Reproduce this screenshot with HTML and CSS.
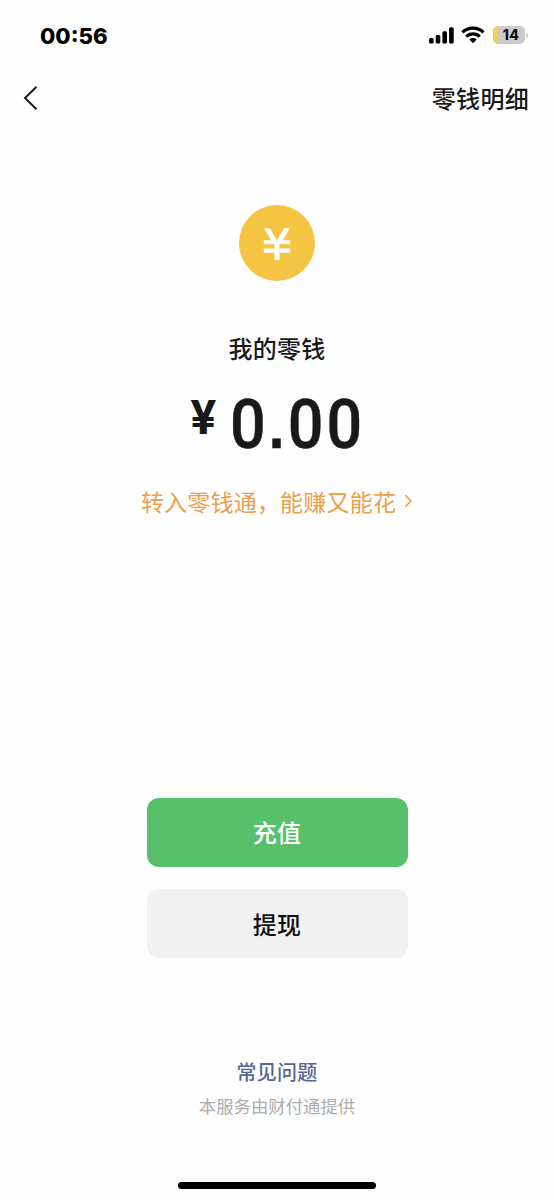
FILE: index.html
```html
<!DOCTYPE html>
<html lang="zh-CN">
<head>
<meta charset="utf-8">
<title>我的零钱</title>
<link rel="stylesheet" href="styles.css">
</head>
<body>
<div class="screen">
  <header class="status">
    <span class="time">00:56</span>
    <div class="indicators">
      <svg class="signal" width="25" height="17" viewBox="0 0 25 17">
        <rect x="0" y="11" width="4.6" height="5.5" rx="1.5"/>
        <rect x="6.7" y="8" width="4.6" height="8.5" rx="1.5"/>
        <rect x="13.4" y="4.3" width="4.6" height="12.2" rx="1.5"/>
        <rect x="20.1" y="0.3" width="4.6" height="16.2" rx="1.5"/>
      </svg>
      <svg class="wifi" width="24" height="18" viewBox="0 0 24 18">
        <path d="M1.500 6.300C7.300.7 16.700.7 22.500 6.300M5.300 10.700C9.100 6.900 14.900 6.900 18.700 10.700" fill="none" stroke="#000" stroke-width="3.200"/>
        <path d="M8.300 13.600C10.400 11.600 13.600 11.600 15.700 13.600L12 17.300Z"/>
      </svg>
      <div class="battery"><span class="level">14</span></div>
      <span class="battery-tip"></span>
    </div>
  </header>
  <nav class="nav">
    <svg class="back" width="16" height="26" viewBox="0 0 16 26"><path d="M13.500 1.800L2 13L13.500 24.200"/></svg>
    <a class="detail">零钱明细</a>
  </nav>
  <main class="main">
    <svg class="coin" width="76" height="76" viewBox="0 0 76 76">
      <circle cx="38" cy="38" r="38" fill="#f5c443"/>
      <path d="M25 23.300H30.800L38 35.500L45.200 23.300H51L43.800 35.200H51.200V39.300H40.500V43.600H51.200V47.700H40.500V55H35.500V47.700H24.800V43.600H35.500V39.300H24.800V35.200H32.200Z" fill="#fff"/>
    </svg>
    <h1 class="title">我的零钱</h1>
    <div class="amount"><span class="currency">¥</span><span class="value">0<span class="point">.</span>00</span></div>
    <a class="promo"><span>转入零钱通，能赚又能花</span><svg class="chevron" width="9" height="14" viewBox="0 0 9 14"><path d="M1.300 1.300L7 7L1.300 12.700"/></svg></a>
  </main>
  <div class="actions">
    <button class="btn primary">充值</button>
    <button class="btn secondary">提现</button>
  </div>
  <footer class="footer">
    <a class="faq">常见问题</a>
    <p class="provider">本服务由财付通提供</p>
    <div class="home"></div>
  </footer>
</div>
</body>
</html>
```
FILE: styles.css
```css
* { box-sizing: border-box; }
body {
  margin: 0;
  background: #fefefe;
  color: #191919;
  font-family: "Noto Sans CJK SC", sans-serif;
}
.screen {
  width: 554px;
  height: 1200px;
  display: flex;
  flex-direction: column;
  overflow: hidden;
}
.status {
  height: 70px;
  padding: 0 28px 0 40px;
  display: flex;
  justify-content: space-between;
  align-items: center;
  color: #000;
}
.time {
  padding-top: 1px;
  font: 800 22.200px/28px Inter, sans-serif;
}
.indicators { display: flex; align-items: center; }
.wifi { margin-left: 7px; }
.battery {
  width: 32px;
  height: 18px;
  margin-left: 8px;
  border-radius: 5px;
  background: linear-gradient(90deg, #f7cf4c 0 5px, #cbcbcb 5px);
}
.level {
  display: block;
  padding-left: 4px;
  text-align: center;
  color: #111;
  font: 800 14px/18px Inter, sans-serif;
  letter-spacing: 0.300px;
}
.battery-tip {
  width: 2px;
  height: 5px;
  margin-left: 1px;
  margin-right: -2px;
  border-radius: 0 2px 2px 0;
  background: #cbcbcb;
}
.nav {
  height: 56px;
  padding: 0 25px 0 23px;
  display: flex;
  justify-content: space-between;
  align-items: center;
}
.back path { fill: none; stroke: #191919; stroke-width: 2; }
.detail { padding-bottom: 2px; font-size: 24px; font-weight: 500; letter-spacing: 0.300px; }
.main {
  height: 672px;
  padding-top: 79px;
  display: flex;
  flex-direction: column;
  align-items: center;
}
.coin { flex: none; }
.title {
  margin: 47px 0 0;
  font-size: 24px;
  line-height: 40px;
  font-weight: 500;
  letter-spacing: 0.300px;
}
.amount {
  height: 80px;
  margin-top: 16px;
  display: flex;
  align-items: flex-start;
}
.currency { width: 26px; margin-top: 6px; font: 700 48px/56px Roboto, sans-serif; }
.value {
  width: 134px;
  height: 80px;
  margin: 1px 0 0 13px;
  white-space: nowrap;
  font: 500 69px/80px Roboto, sans-serif;
  letter-spacing: 3.500px;
  -webkit-text-stroke: 0.500px #191919;
  transform: scaleX(0.91);
  transform-origin: left;
}
.point { font: 700 62px/1 "Liberation Sans", sans-serif; letter-spacing: 3.500px; }
.promo {
  margin-top: 17px;
  display: flex;
  align-items: center;
  color: #eb9f4b;
  font-size: 23px;
  line-height: 40px;
  letter-spacing: 0.200px;
}
.chevron { margin-left: 8px; }
.chevron path { fill: none; stroke: #eb9f4b; stroke-width: 1.600; }
.actions {
  display: flex;
  flex-direction: column;
  align-items: center;
  gap: 22px;
}
.btn {
  width: 261px;
  height: 69px;
  padding: 0 0 2px;
  border: 0;
  border-radius: 12px;
  font: 500 24px/67px "Noto Sans CJK SC", sans-serif;
  letter-spacing: 0.300px;
}
.primary { background: #58bf6b; color: #fff; }
.secondary { padding-bottom: 0; background: #f1f1f1; color: #111; }
.footer {
  margin-top: 99px;
  display: flex;
  flex-direction: column;
  align-items: center;
}
.faq { color: #576693; font-size: 20px; line-height: 30px; font-weight: 500; letter-spacing: 0.200px; }
.provider { margin: 6px 0 0; color: #adadad; font-size: 17.400px; line-height: 26px; }
.home { width: 198px; height: 7px; margin-top: 63px; border-radius: 4px; background: #000; }
```
